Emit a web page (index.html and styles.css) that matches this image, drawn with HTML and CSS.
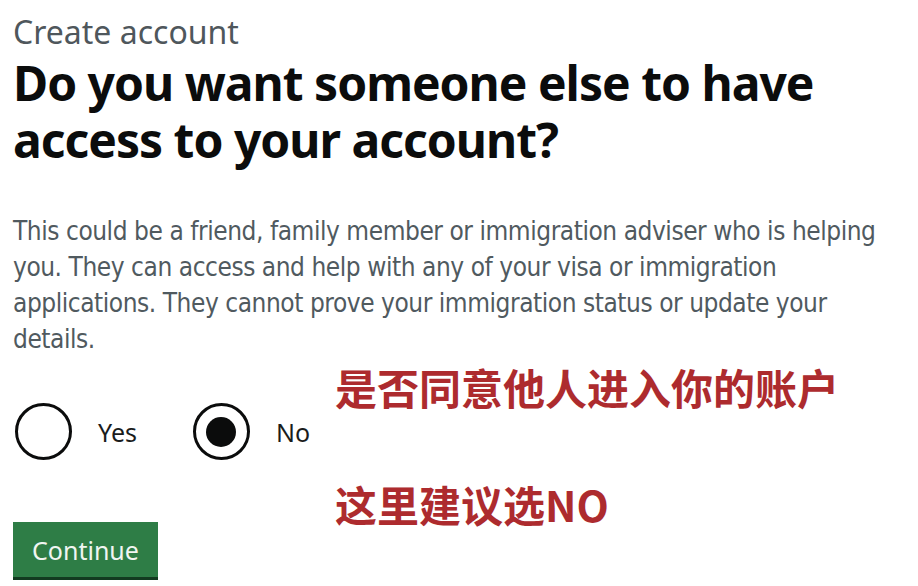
FILE: index.html
```html
<!DOCTYPE html>
<html lang="en">
<head>
<meta charset="utf-8">
<title>Create account</title>
<link rel="stylesheet" href="styles.css">
</head>
<body>
<main class="page">
  <span class="caption">Create account</span>
  <h1 class="heading">Do you want someone else to have access to your account?</h1>
  <p class="body">This could be a friend, family member or immigration adviser who is helping you. They can access and help with any of your visa or immigration applications. They cannot prove your immigration status or update your details.</p>
  <div class="radios">
    <label class="radio"><span class="circle"></span><span class="radio-label">Yes</span></label>
    <label class="radio"><span class="circle checked"></span><span class="radio-label">No</span></label>
  </div>
  <button class="button">Continue</button>
  <div class="note note-1">是否同意他人进入你的账户</div>
  <div class="note note-2">这里建议选NO</div>
</main>
</body>
</html>
```

FILE: styles.css
```css
html, body {
  margin: 0;
  padding: 0;
  background: #ffffff;
}
.page {
  position: relative;
  width: 918px;
  height: 586px;
  overflow: hidden;
  padding: 0 13px;
  box-sizing: border-box;
  font-family: "Noto Sans", sans-serif;
}
.caption {
  display: block;
  margin-top: 10px;
  font-size: 32px;
  line-height: 44px;
  color: #4f575c;
}
.heading {
  margin: 0;
  font-size: 48px;
  line-height: 57px;
  font-weight: 700;
  color: #0b0c0c;
  letter-spacing: -1px;
  width: 860px;
}
.body {
  margin: 45px 0 0;
  width: 882px;
  font-family: "DejaVu Sans Condensed", "Noto Sans", sans-serif;
  font-stretch: condensed;
  font-size: 26px;
  line-height: 36px;
  color: #505a5f;
  letter-spacing: -0.45px;
}
.radios {
  display: flex;
  margin-top: 46px;
  padding-left: 2px;
}
.radio {
  display: flex;
  align-items: center;
  gap: 26px;
  margin-right: 56px;
}
.circle {
  width: 51px;
  height: 51px;
  border: 3px solid #0b0c0c;
  border-radius: 50%;
  display: flex;
  align-items: center;
  justify-content: center;
}
.circle.checked::after {
  content: "";
  width: 30px;
  height: 30px;
  border-radius: 50%;
  background: #0b0c0c;
}
.radio-label {
  font-size: 25px;
  color: #1a1c1c;
}
.button {
  display: block;
  margin-top: 62px;
  width: 145px;
  height: 58px;
  background: #2e7d46;
  border: 0;
  border-bottom: 3px solid #123b20;
  color: #f0f5f1;
  font-family: "Noto Sans", sans-serif;
  font-size: 25px;
  padding: 0;
}
.note {
  position: absolute;
  left: 335px;
  font-family: "Noto Sans CJK SC", sans-serif;
  font-weight: 700;
  font-size: 42px;
  line-height: 50px;
  color: #ad2b2e;
}
.note-1 { top: 362px; }
.note-2 { top: 479px; }
```
